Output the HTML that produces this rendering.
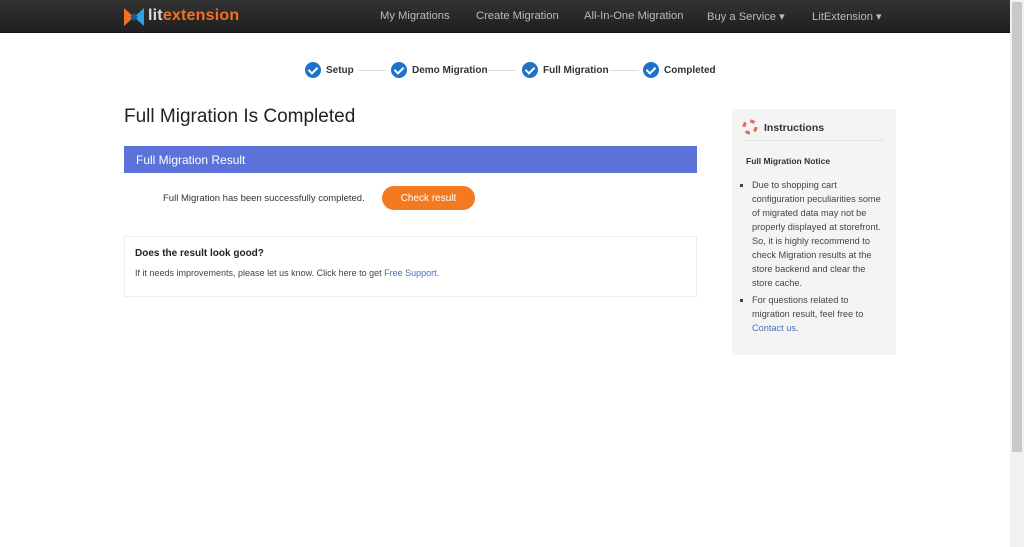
<!DOCTYPE html>
<html><head><style>
*{margin:0;padding:0;box-sizing:border-box}
body{width:1024px;height:547px;overflow:hidden;background:#fff;font-family:"Liberation Sans",sans-serif;position:relative;color:#333}
.nav{position:absolute;left:0;top:0;width:1010px;height:33px;background:linear-gradient(#333,#1f1f1f);border-bottom:1px solid #111}
.nav a{position:absolute;top:10px;font-size:11.2px;color:#bbb}
.sb{position:absolute;left:1010px;top:0;width:14px;height:547px;background:#f1f1f1}
.sb div{position:absolute;left:2px;top:2px;width:10px;height:450px;background:#c8c8c8}
.step{position:absolute;top:62px;font-size:10px;font-weight:bold;color:#333;display:flex;align-items:center}
.chk{width:16px;height:16px;border-radius:50%;background:#1e73c8;margin-right:5px;display:inline-block;position:relative}
.chk:after{content:"";position:absolute;left:5px;top:3px;width:4px;height:7px;border:solid #fff;border-width:0 2px 2px 0;transform:rotate(45deg)}
.line{position:absolute;top:70px;height:1px;background:#ddd}
</style></head><body>
<div class="nav">
 <svg style="position:absolute;left:124px;top:8px" width="20" height="18"><polygon points="0,0 10,9 0,18" fill="#f36f21"/><polygon points="20,0 10,9 20,18" fill="#2fa0e0"/><polygon points="6,9 10,5 14,9 10,13" fill="#1a5a9a"/></svg>
 <div style="position:absolute;left:148px;top:7px;font-size:16px;font-weight:bold;letter-spacing:0.2px"><span style="color:#ddd">lit</span><span style="color:#f36f21">extension</span></div>
 <a style="left:380px">My Migrations</a>
 <a style="left:476px">Create Migration</a>
 <a style="left:584px">All-In-One Migration</a>
 <a style="left:707px">Buy a Service ▾</a>
 <a style="left:812px">LitExtension ▾</a>
</div>
<div class="sb"><div></div></div>
<div class="step" style="left:305px"><span class="chk"></span>Setup</div>
<div class="line" style="left:358px;width:28px"></div>
<div class="step" style="left:391px"><span class="chk"></span>Demo Migration</div>
<div class="line" style="left:488px;width:28px"></div>
<div class="step" style="left:522px"><span class="chk"></span>Full Migration</div>
<div class="line" style="left:609px;width:30px"></div>
<div class="step" style="left:643px"><span class="chk"></span>Completed</div>
<div style="position:absolute;left:124px;top:106px;font-size:19px;color:#222">Full Migration Is Completed</div>
<div style="position:absolute;left:124px;top:146px;width:573px;height:27px;background:#5b72d8;color:#fff;font-size:12px;padding:7px 12px">Full Migration Result</div>
<div style="position:absolute;left:163px;top:193px;font-size:9.5px;color:#333">Full Migration has been successfully completed.</div>
<div style="position:absolute;left:382px;top:186px;width:93px;height:24px;border-radius:12px;background:#f47a22;color:#fff;font-size:10px;text-align:center;line-height:24px;padding-top:1px">Check result</div>
<div style="position:absolute;left:124px;top:236px;width:573px;height:61px;border:1px solid #eee">
 <div style="position:absolute;left:10px;top:11px;font-size:10px;font-weight:bold;color:#222">Does the result look good?</div>
 <div style="position:absolute;left:10px;top:31px;font-size:9px;color:#444">If it needs improvements, please let us know. Click here to get <span style="color:#4a6fb5">Free Support</span>.</div>
</div>
<div style="position:absolute;left:732px;top:109px;width:164px;height:246px;background:#f4f4f5">
 <svg style="position:absolute;left:10px;top:10px" width="16" height="16"><circle cx="8" cy="8" r="6" fill="none" stroke="#e86a5e" stroke-width="3" stroke-dasharray="4.7 4.7"/></svg>
 <div style="position:absolute;left:32px;top:13px;font-size:10.5px;font-weight:bold;color:#333">Instructions</div>
 <div style="position:absolute;left:10px;top:31px;width:143px;height:1px;background:#e4e4e4"></div>
 <div style="position:absolute;left:14px;top:47px;font-size:8.5px;font-weight:bold;color:#333">Full Migration Notice</div>
 <ul style="position:absolute;left:20px;top:69px;width:130px;font-size:9.2px;line-height:14px;color:#444;list-style:square;padding-left:0">
  <li>Due to shopping cart configuration peculiarities some of migrated data may not be properly displayed at storefront. So, it is highly recommend to check Migration results at the store backend and clear the store cache.</li>
  <li style="margin-top:3px">For questions related to migration result, feel free to <span style="color:#4a6fb5">Contact us</span>.</li>
 </ul>
</div>
</body></html>
